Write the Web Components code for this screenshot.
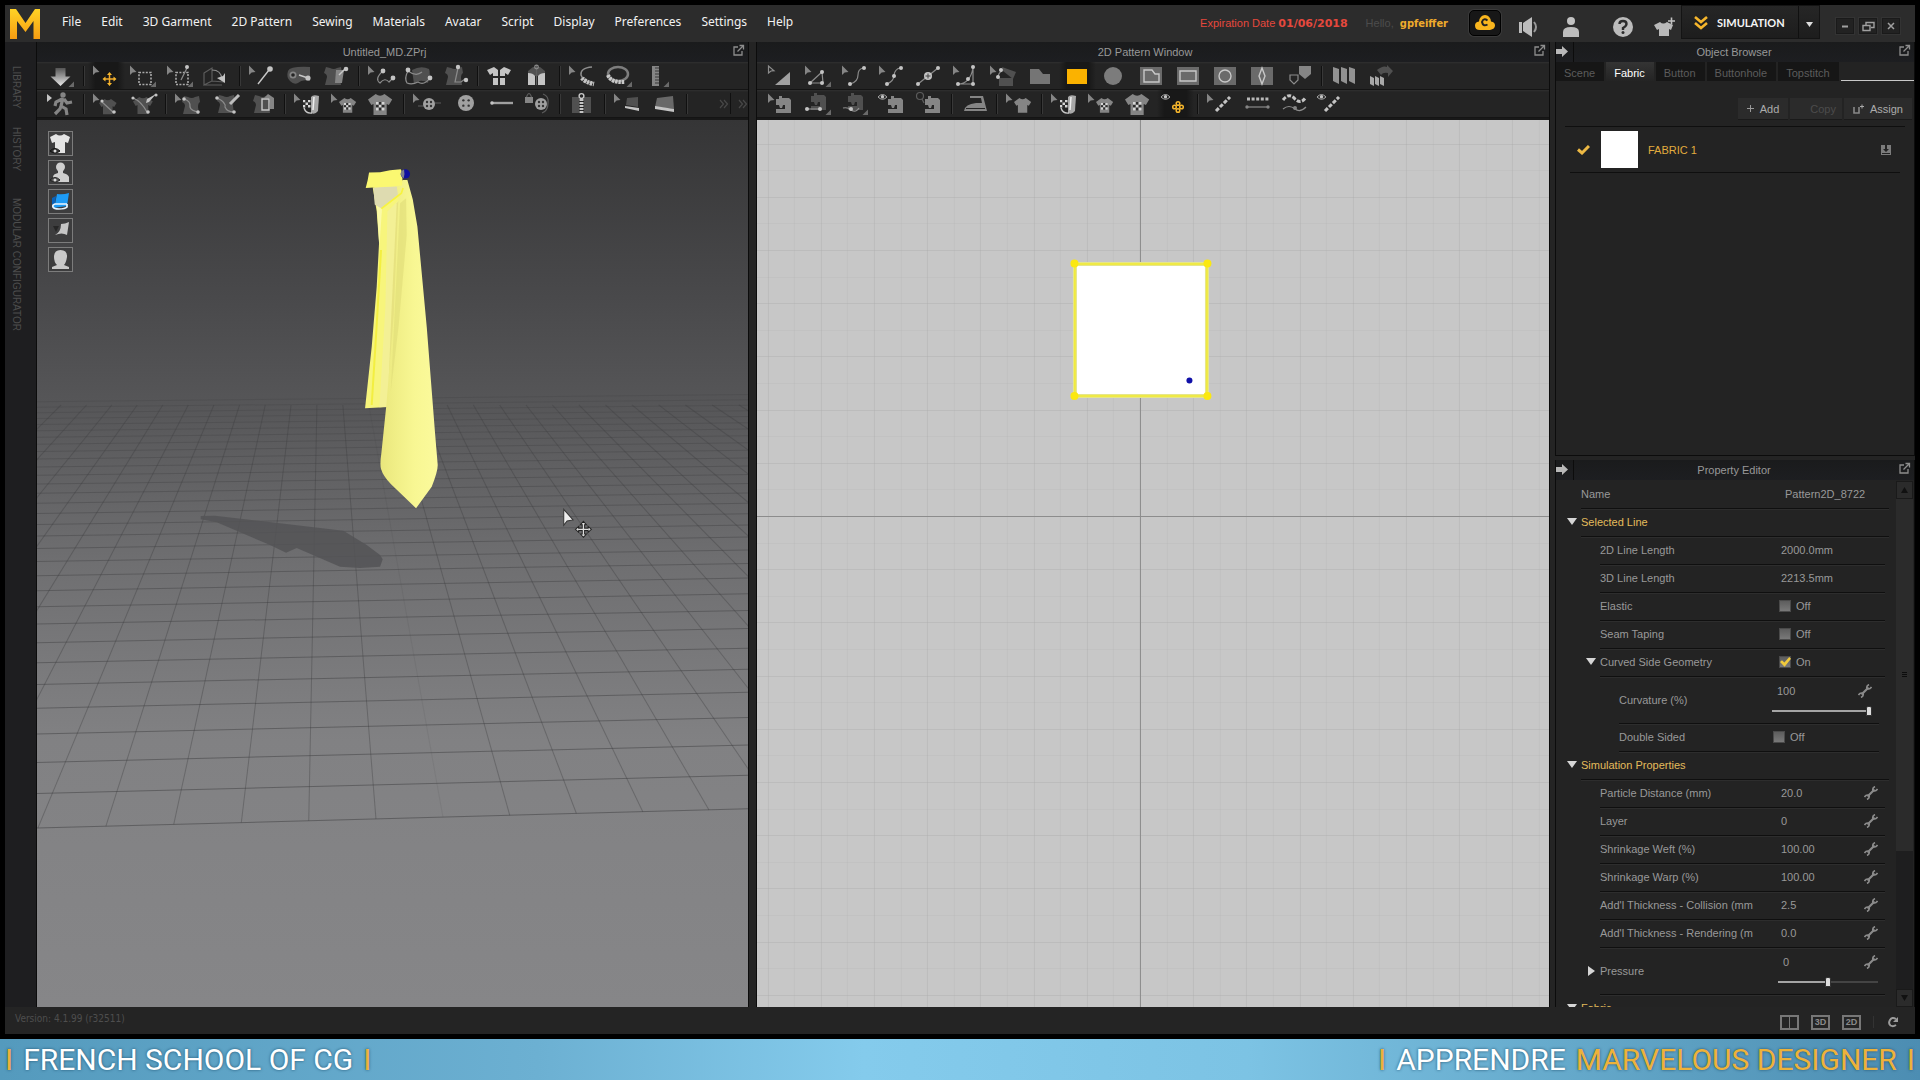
<!DOCTYPE html>
<html lang="en">
<head>
<meta charset="utf-8">
<title>Untitled_MD.ZPrj</title>
<style>
  html, body { height: 100%; }
  body {
    margin: 0; background: #000; color: #a2a2a2; overflow: hidden;
    font: 11px/16px "Liberation Sans", Arial, sans-serif;
    display: flex; flex-direction: column;
  }
  md-app { flex: 1; min-height: 0; }
</style>
</head>
<body>
<md-app></md-app>
<md-banner><span slot="left">FRENCH SCHOOL OF CG</span><span slot="right">APPRENDRE</span><span slot="accent">MARVELOUS DESIGNER</span></md-banner>

<script>
const RESET = `<style>
  *, *::before, *::after { box-sizing: border-box; }
  button { font: inherit; color: inherit; background: none; border: 0; padding: 0; margin: 0; }
  svg { display: block; }
  .g { fill: #858585; } .w { fill: #c4c4c4; } .d { fill: #505050; } .k { fill: #242424; } .y { fill: #f6b62c; }
  .lg { fill: none; stroke: #8c8c8c; stroke-width: 1.2; }
  .lw { fill: none; stroke: #c8c8c8; stroke-width: 1.4; }
  .ly { fill: none; stroke: #f0a92b; stroke-width: 1.5; }
  .ld { fill: none; stroke: #5c5c5c; stroke-width: 1.2; }
</style>`;

function component(tag, html, connect) {
  const template = document.createElement('template');
  template.innerHTML = RESET + html;
  customElements.define(tag, class extends HTMLElement {
    constructor() {
      super();
      this.attachShadow({ mode: 'open' }).append(template.content.cloneNode(true));
    }
    connectedCallback() { if (connect) connect(this, this.shadowRoot); }
  });
}

/* ---------- tool glyphs, drawn on a 37 x 28 cell ---------- */
const cur = '<path class="g" d="M5 3.500v9.500l2.600-2.600 3.900-.4z"/>';
const corner = '<path d="M31 19.500v5.500h-5.500z" fill="#6a6a6a"/>';
const dot = (x, y, r = 2) => `<circle class="w" cx="${x}" cy="${y}" r="${r}"/>`;
const eye = '<path d="M4 7q4.500-5 9 0-4.500 4.500-9 0z" fill="none" stroke="#a8a8a8"/><circle class="w" cx="8.500" cy="6.800" r="1.700"/>';
const machine = (c, x, y) => `<path class="${c}" transform="translate(${x} ${y})" d="M0 3h3V0h3v2h7l2 2v13H0v-4h9V9H7l-1 3H4L3 9H0z"/>`;
const tee = (c, x, y, s) => `<path class="${c}" transform="translate(${x} ${y}) scale(${s})" d="M7 0q4 3 8 0l7 5-3 5-2-1v10H5V9l-2 1-3-5z"/>`;
const checks = (x, y, s) => { let o = ''; for (let r = 0; r < 3; r++) for (let c = 0; c < 3; c++) o += `<rect x="${x + c * s}" y="${y + r * s}" width="${s}" height="${s}" fill="${(r + c) % 2 ? '#2c2c2c' : '#d6d6d6'}"/>`; return o; };
const bodice = (c, x, y) => `<path class="${c}" transform="translate(${x} ${y})" d="M2 0l4 1q4 2 7 0l4-1 1 6q-2 1-2 5l1 7H1l2-8q0-3-3-4z"/>`;
const btn = (x, y, r) => `<circle cx="${x}" cy="${y}" r="${r}" fill="#a0a0a0"/><g fill="#333"><circle cx="${x - r / 3}" cy="${y - r / 3}" r="1.200"/><circle cx="${x + r / 3}" cy="${y - r / 3}" r="1.200"/><circle cx="${x - r / 3}" cy="${y + r / 3}" r="1.200"/><circle cx="${x + r / 3}" cy="${y + r / 3}" r="1.200"/></g>`;
const roll = '<path d="M22 7q2-3 8-1l-1 15q-3 4-7 2z" fill="#a8a8a8"/><path d="M25 7l-1 13" stroke="#eee" stroke-width="1.500"/><path d="M15 18q2 6 8 5" class="lw"/>' + checks(14, 10, 2.5);
const plate = '<path fill="#6a6a6a" d="M7 5h22v18H7z"/>';

const ICONS = {
  down: '<path fill="url(#fade)" d="M12.500 6h10v8.500h5L17.500 24l-10-9.500h5z"/>' + corner,
  move: cur + '<g transform="translate(21.500 17)"><path class="ly" d="M-5 0H5M0-5V5"/><path class="y" d="M-7 0l3-2.500v5zM7 0L4-2.500v5zM0-7l2.500 3h-5zM0 7l2.500-3h-5z"/></g>',
  marquee: cur + '<path d="M14 10.500h12v12H14z" fill="none" stroke="#a9a9a9" stroke-width="1.600" stroke-dasharray="2 1.400"/>' + corner,
  marqueepin: cur + '<path d="M14 10.500h12v12H14z" fill="none" stroke="#a9a9a9" stroke-width="1.600" stroke-dasharray="2 1.400"/><path class="lg" d="M19 18l6-12"/>' + dot(25, 5) + corner,
  fold: '<path class="ld" d="M5 11l8-5v13l-8 4zM5 23h18M13 19l12 1"/><path class="lg" d="M13 8q9 0 10 9"/><path class="w" d="M18 16l8 5 0-10-2 3z"/>',
  pin: cur + '<path class="lw" d="M14 22l11-14"/>' + dot(26, 7, 2.8),
  rollpin: '<path class="d" d="M7 9q2-5 22-4v14q-8-2-12 2-4 2-8-2-4-4-2-10z"/><circle class="g" cx="12" cy="13" r="3.500"/><circle class="k" cx="12" cy="13" r="1.800"/><path class="lw" d="M18 13l9 3"/>' + dot(27, 16, 2.6),
  bodicepin: bodice('d', 6, 5) + '<path class="g" d="M18 8h8l-2 13h-7z"/><path class="lw" d="M21 13l6-6"/>' + dot(28, 7, 2.3),
  curve: cur + '<path class="lg" d="M20 9q-9 8-3 12 5-6 9-1l4-4"/>' + dot(20, 9, 2.4) + dot(30, 16, 2.4),
  blob: '<path class="d" d="M12 8q9-5 17-1 2 4-1 14-8-5-14 1z"/><path class="lg" d="M8 9q8 6 14 1M8 9Q4 16 7 21q5 2 11-1 6 4 12-4"/>' + dot(8, 8, 2.4) + dot(30, 16, 2.4),
  bodicepins: bodice('d', 8, 5) + '<path class="lg" d="M21 6l-3 14h6l4-3"/>' + dot(21, 5, 2.2) + dot(29, 18, 2.2),
  shirt4: '<path class="w" d="M12 5l4 3v6H11v-3l-3 2-3-5zM22 5l-4 3v6h5v-3l3 2 3-5zM11 16h5v7h-5zM18 16h5v7h-5z"/>',
  jacket: '<path class="d" d="M9 9l5-4h7l5 4v5H9z"/><path class="w" d="M9 11q5 0 7 3v9H9zM26 11q-5 0-7 3v9h7z"/><path class="ld" d="M17.500 3v20"/><circle cx="17.500" cy="5" r="1.800" class="lg"/>',
  tapecur: cur + '<path d="M28 5q-12 1-11 8 2 7 13 8" fill="none" stroke="#8e8e8e" stroke-width="1.500"/><path d="M18 16q3 4 12 6" fill="none" stroke="#c4c4c4" stroke-width="4.500" stroke-dasharray="2.400 .8"/>',
  tape: '<ellipse cx="17" cy="12" rx="10" ry="7" fill="none" stroke="#7d7d7d" stroke-width="2.500"/><path d="M7 13q3 8 17 7" fill="none" stroke="#c9c9c9" stroke-width="4" stroke-dasharray="2.500 .8"/>' + corner,
  ruler: '<path class="g" d="M14 4h7v20h-7z"/><path stroke="#383838" stroke-width="1.200" d="M17 6h4M17 9h4M17 12h4M17 15h4M17 18h4M17 21h4"/>' + corner,
  walk: '<path class="w" d="M4 4l5 4-5 4z"/><circle class="g" cx="20" cy="5" r="2.700"/><path d="M20 8l-2 8-1 3-5 5M18 16l5 3 1 6M19 9l-6 3-1 4M21 9l3 4 5-1" fill="none" stroke="#858585" stroke-width="3.200"/>',
  teecurve: cur + tee('d', 11, 9, .8) + '<path class="lg" d="M14 12l12 11"/>' + dot(14, 11, 1.6) + dot(26, 22, 1.8),
  teepen: tee('d', 8, 7, .9) + '<path class="lg" d="M8 8q8 3 14 14"/><path class="w" d="M31 4l-9 5-1 4 3-1z"/>' + dot(8, 8, 1.6) + dot(23, 22, 1.8) + dot(31, 5, 1.6),
  bodcurve: cur + bodice('d', 12, 6) + '<path class="lg" d="M14 9q7 2 6 8 1 4 9 5"/>' + dot(14, 9, 1.8) + dot(28, 22, 1.8),
  bodpen: bodice('d', 10, 5) + '<path class="lg" d="M10 8q9 4 8 9 2 5 9 5"/><path d="M32 5l-9 9" stroke="#bdbdbd" stroke-width="3"/>' + dot(10, 8, 1.8) + dot(27, 22, 1.8),
  bodsq: bodice('d', 9, 5) + '<path class="g" d="M20 8l4-4 6 4v11h-4V8z"/><path class="lw" d="M18 9h7v11h-7z"/>',
  texroll: cur + roll,
  texteecur: cur + tee('g', 13, 8, .78) + checks(18, 13, 2.2),
  textee: tee('g', 5, 4, 1.1) + checks(13, 12, 2.8),
  btncur: cur + '<path class="ld" d="M10 16h6M27 13h6"/>' + btn(21, 14, 6),
  btn: btn(21, 13, 8),
  hole: '<path d="M9 13h22" stroke="#a0a0a0" stroke-width="2.400"/><circle cx="10" cy="13" r="1.800" class="w"/>',
  lock: '<path class="g" d="M6 7h8v6H6z"/><path class="ld" d="M7.500 7q2.500-7 5 0"/>' + btn(22, 14, 6) + '<path class="ld" d="M24 4q6 2 5 9 0 8-6 10"/>',
  zip: '<path class="d" d="M8 7h7v16H8zM20 7h7v16h-7z"/><path d="M17.500 9v15" stroke="#c4c4c4" stroke-width="4" stroke-dasharray="2 1"/><circle cx="17.500" cy="6" r="2.400" class="lw"/>',
  flatcur: cur + '<path class="d" d="M18 8l11-1v10l-12-2z"/><path class="w" d="M16 16l14 2v3l-14-3z"/>',
  flat: '<path fill="#686868" d="M11 8l16-2 1 13-19-2z"/><path class="w" d="M9 16l19 3v3L9 19z"/>',
  more: '<path fill="none" stroke="#484848" stroke-width="1.200" d="M9 10l3.500 4L9 18M13 10l3.500 4L13 18M28 10l3.500 4-3.500 4M32 10l3.500 4-3.500 4"/><path stroke="#101010" d="M19.500 3v21"/>',
  transform: '<path class="lg" d="M5.500 4v7l2.500-2 3-.3z"/><path fill="#a0a0a0" d="M27 10v13H12z"/>',
  editpt: cur + '<path class="lg" d="M22 10L10 21h13z"/>' + dot(22, 10) + dot(10, 21) + dot(22, 21) + corner,
  curvept: cur + '<path class="lg" d="M13 22q8-2 8-9 0-6 5-7"/>' + dot(13, 22) + dot(27, 6),
  curve3: cur + '<path class="lg" d="M13 22q7-3 7-9 1-6 6-7"/>' + dot(13, 22) + dot(20, 14) + dot(27, 6),
  addpt: '<path class="lg" d="M7 22L27 6"/>' + dot(7, 22) + dot(27, 6) + '<circle cx="17" cy="14" r="4" class="w"/><path stroke="#444" d="M14.500 14h5M17 11.500v5"/>',
  trace: cur + '<path class="lg" d="M25 5v17H10Q22 22 25 6"/>' + dot(25, 5) + dot(10, 22) + dot(25, 22) + dot(20, 17),
  trace2: cur + '<path class="d" d="M14 16h14v8H14zM17 5l14 5-3 7-10-8z"/><path class="lg" d="M17 9q-4 2-4 7"/>' + dot(16, 8) + dot(13, 15),
  poly: '<path class="g" style="fill:#757575" d="M8 7h9l4 5h7v10H8z"/>',
  rect: '<path fill="#fbb200" d="M8 7h20v15H8z"/>',
  circle: '<circle fill="#7c7c7c" cx="17" cy="14" r="9"/>',
  ipoly: plate + '<path class="lw" d="M11 8h8l3 4h4v8H11z"/>',
  irect: plate + '<path class="lw" d="M10 9h16v10H10z"/>',
  icircle: plate + '<circle class="lw" cx="18" cy="14" r="6"/>',
  dart: plate + '<path class="lw" d="M18 6l3 8-3 8-3-8z"/>',
  shield: '<path class="lg" d="M9 13h8v5l-4 4-4-4z"/><path class="g" d="M18 4h12v8l-6 5-6-5z"/>',
  pleat: '<path fill="#929292" d="M7 5l6 2v15l-6-3zM15 5l6 2v15l-6-3zM23 5l6 2v15l-6-3z"/>',
  pleat2: '<path fill="#a8a8a8" d="M7 14l4 2v8l-4-2zM12 14l4 2v8l-4-2zM17 14l4 2v8l-4-2z"/><path class="d" d="M14 8q6-5 10-3V3l6 6-5 6v-4q-5-1-7 2z"/>',
  mach: cur + machine('g', 13, 6),
  mach2: machine('d', 11, 3) + '<path class="lg" d="M7 19h13"/>' + dot(7, 19) + dot(20, 19) + corner,
  mach3: machine('d', 11, 3) + '<path class="lg" d="M6 18q5-1 8 2 5 3 8-2"/>' + dot(14, 19) + corner,
  macheye: eye + machine('g', 14, 6),
  machlens: '<circle class="ld" cx="9" cy="6" r="3.500"/><path class="ld" d="M11 9l2 4"/>' + machine('g', 14, 6),
  iron: '<path class="g" fill-rule="evenodd" d="M14 6h13l4 15H8q1-7 12-8h6l-1-5H14z"/><path class="k" d="M10 18h19v1H10z"/>',
  teecur: cur + tee('g', 13, 8, .78),
  eyegold: eye + '<g fill="none" stroke="#f6b62c" stroke-width="1.500"><circle cx="21" cy="13.500" r="1.800"/><circle cx="21" cy="20.500" r="1.800"/><circle cx="17.500" cy="17" r="1.800"/><circle cx="24.500" cy="17" r="1.800"/></g>',
  stitchcur: cur + '<path d="M14 21L28 7" stroke="#c4c4c4" stroke-width="3" stroke-dasharray="4 1.600"/>',
  stitch: '<path d="M8 9h22" stroke="#b9b9b9" stroke-width="2.800" stroke-dasharray="3 1.600"/><path class="lg" d="M8 17h21"/><circle class="g" cx="8" cy="17" r="1.700"/><circle class="g" cx="29" cy="17" r="1.700"/>',
  stitchwave: '<path d="M7 10q6-8 12-1 6 6 11-2" fill="none" stroke="#c4c4c4" stroke-width="3" stroke-dasharray="4 1.600"/><path class="lg" d="M7 19q6-5 12 0 5 4 11-2"/><circle class="g" cx="19" cy="18" r="2"/>',
  stitcheye: eye + '<path d="M12 21L26 7" stroke="#c4c4c4" stroke-width="3" stroke-dasharray="4 1.600"/>'
};

component('md-tool', `<style>
  :host { display: block; flex: none; width: 37px; height: 27px; }
  button { display: block; width: 100%; height: 100%; }
  :host([active]) button { background: linear-gradient(90deg, #1c1c1c00 0, #181818 20%, #181818 80%, #1c1c1c00); }
</style><button type="button"><svg width="37" height="27" viewBox="0 0 37 27"></svg></button>`,
(el, root) => {
  const name = el.getAttribute('icon');
  root.querySelector('button').title = name;
  root.querySelector('svg').innerHTML =
    '<defs><linearGradient id="fade" x2="0" y2="1"><stop stop-color="#555"/><stop offset="1" stop-color="#e8e8e8"/></linearGradient></defs>' + ICONS[name];
});

component('md-toolbar', `<style>
  :host { display: flex; flex: none; height: 28px; padding-left: 6px; overflow: hidden;
    background: linear-gradient(#303030, #242424 2px); border-bottom: 1px solid #141414; }
  i { flex: none; width: 8px; height: 20px; margin-top: 4px;
    background: linear-gradient(90deg, transparent 3px, #101010 3px 4px, #383838 4px 5px, transparent 5px); }
  b { flex: 1; }
</style>`,
(el, root) => {
  el.getAttribute('tools').split(' ').forEach(t => {
    let n;
    if (t === '|') n = document.createElement('i');
    else if (t === '>') n = document.createElement('b');
    else {
      n = document.createElement('md-tool');
      n.setAttribute('icon', t.replace('*', ''));
      if (t.endsWith('*')) n.setAttribute('active', '');
    }
    root.append(n);
  });
});

/* ---------- dock panel ---------- */
component('md-panel', `<style>
  :host { display: flex; flex-direction: column; min-width: 0; min-height: 0; background: #232323; border: 0 solid #0c0c0c; border-width: 0 1px; }
  header { flex: none; height: 20px; display: flex; align-items: center; background: linear-gradient(#1a1b1c, #1d1e21); color: #989898; }
  h2 { flex: 1; margin: 0; font: inherit; text-align: center; }
  .hide { display: none; width: 18px; height: 20px; border-right: 1px solid #0c0c0c; }
  :host([collapsible]) .hide { display: block; }
  :host([collapsible]) h2 { padding-right: 4px; }
  .pop { width: 16px; height: 20px; }
  ::slotted(.view) { flex: 1; min-height: 0; }
</style>
<header>
  <button class="hide" title="Hide"><svg width="13" height="20" viewBox="0 0 13 20"><path fill="#b9b9b9" d="M0 7h6V4l6 5.500-6 5.500v-3H0z"/></svg></button>
  <h2><slot name="title"></slot></h2>
  <button class="pop" title="Undock"><svg width="14" height="20" viewBox="0 0 14 20"><path d="M6 5H2v8h8V9" fill="none" stroke="#8d8d8d" stroke-width="1.300"/><path d="M5.500 9.500L11 4M7.500 3.500h4v4" fill="none" stroke="#8d8d8d" stroke-width="1.300"/></svg></button>
</header><slot></slot>`);

/* ---------- 3D scene ---------- */
component('md-scene', `<style>
  :host { display: block; position: relative; border-top: 2px solid #181818; background: #6a6a6c; overflow: hidden; }
  .scene { width: 100%; height: 100%; }
  nav { position: absolute; left: 11px; top: 11px; display: flex; flex-direction: column; gap: 4px; }
  nav button { width: 25px; height: 25px; border: 1px solid #7c7c7c; background: #3d3d3e; }
</style>
<svg class="scene" viewBox="37 120 711 887" preserveAspectRatio="xMidYMid slice">
  <defs>
    <linearGradient id="sky" x2="0" y2="1">
      <stop stop-color="#353536"/><stop offset=".2" stop-color="#49494b"/><stop offset=".32" stop-color="#565658"/>
      <stop offset=".5" stop-color="#6f6f71"/><stop offset=".7" stop-color="#818183"/><stop offset="1" stop-color="#868688"/>
    </linearGradient>
    <linearGradient id="cloth"><stop stop-color="#e9e67c"/><stop offset=".25" stop-color="#f0ee86"/><stop offset=".6" stop-color="#f8f793"/><stop offset="1" stop-color="#fbfa9c"/></linearGradient>
  </defs>
  <rect x="37" y="120" width="711" height="887" fill="url(#sky)"/>
  <g id="floor" stroke="#3c3c3e"></g>
  <g transform="translate(180 140) scale(.33333)">
    <path fill="#545456" opacity=".85" d="M62 1128l43-1 195 23 190 22 70 43 40 30 8 13-8 22-60 4-60-4-130-56-32 14-48-23-160-68-48-9z"/>
    <path fill="#f7f57c" d="M578 143l12 72 7 95-7 130-15 180-20 185 68-4 50-320 25-260-20-100z"/>
    <path fill="#f3f095" d="M622 215l40-40 2 160-22 250-22 215-22 2 18-300z"/>
    <path fill="#e3df7a" opacity=".8" d="M650 190l18-20-10 250-18 180-14 120 8-200z"/>
    <path fill="#fbfaa8" d="M590 195l16 10-8 115z"/>
    <path fill="none" stroke="#f2ec2e" stroke-width="6" opacity=".75" d="M603 330l-14 240-14 225"/>
    <path fill="#dedbb0" d="M580 143l88-4 2 12-66 55-20-12z"/>
    <path fill="url(#cloth)" d="M668 120l14 0 16 58 14 82 28 300 25 320 8 95q0 20-18 65l-47 65-75-72q-24-25-30-46-4-14 1-48l15-145 22-270 14-350-5-36z"/>
    <path fill="#e0dc78" opacity=".6" d="M660 190l18-15 2 110-24 270-24 200 14-280z"/>
    <path fill="none" stroke="#f7f33f" stroke-width="5" d="M604 206l60-46 5-16"/>
    <path fill="#fbf871" d="M567 98l33-1 30-6 32-3 6 12-2 37-86 6-23 1 6-24z"/>
    <circle cx="676" cy="102" r="14" fill="#0e0e9e"/><path fill="#7d7f8c" d="M672 89q-10 4-10 14 1 9 9 12 4-12 1-26z"/>
    <path fill="#eee" stroke="#333" stroke-width="3" d="M1151 1108v48l10-13 18-3z"/>
    <g transform="translate(1210 1168)"><path d="M-17 0h34M0-17v34" stroke="#222" stroke-width="10"/><path fill="#ddd" stroke="#222" stroke-width="3" d="M-24 0l10-9v18zM24 0l-10-9v18zM0-24l9 10h-18zM0 24l9-10h-18z"/><path d="M-16 0h32M0-16v32" stroke="#ddd" stroke-width="4"/></g>
  </g>
</svg>
<nav>
  <button title="Garment"><svg width="23" height="23"><path fill="#e4e4e4" d="M7 2q4 3 8 0l6 3-2 6-3-1v11H6V10l-3 1-2-6z"/><path d="M1 19q5-5 10 0-5 4-10 0z" fill="#333" stroke="#111"/><circle cx="6" cy="19" r="1.500" fill="#ddd"/></svg></button>
  <button title="Avatar"><svg width="23" height="23"><circle cx="11.500" cy="6" r="4.500" fill="#cfcfcf"/><path fill="#cfcfcf" d="M9 9h5v3q5 1 6 4v5H4v-5q0-3 5-4z"/><path d="M1 19q5-5 10 0-5 4-10 0z" fill="#555" stroke="#222"/><circle cx="6" cy="19" r="1.500" fill="#ddd"/></svg></button>
  <button title="Texture surface"><svg width="23" height="23"><path fill="#1d9bf5" d="M8 4q6 1 12-1l-2 13-14 2q-1-3 2-4z"/><path fill="#0a62b8" d="M3 8l4-2-1 8-3 1z"/><path d="M18 14H6q-3 1-2 3 1 2 6 2 6 0 8-2v-3" fill="none" stroke="#eaf6ff" stroke-width="1.700"/></svg></button>
  <button title="Thickness"><svg width="23" height="23"><path fill="#c6c6c6" d="M12 5q4 0 8-2l-2 13q-5-3-12 0 6-3 6-11z"/><path fill="#1c1c1c" d="M4 7h6l-3 6z" opacity=".7"/></svg></button>
  <button title="Head"><svg width="23" height="23"><path fill="#c9c9c9" d="M11.500 2q7 0 6.500 7-1 6-3 8l5 2v2H3v-2l5-2Q5 14 5 9q0-7 6.500-7z"/></svg></button>
</nav>`,
(el, root) => {
  /* ground grid in one-point perspective: columns meet at (322,145), rows at a far point on the right */
  const P = { x: 322, y: 145 }, R = { x: 25300, y: 145 };
  const rowY = (k, x) => { const y0 = 142 + 686 * 18.9 / (18.9 + k); return y0 + (R.y - y0) * (x - 38) / (R.x - 38); };
  let out = '';
  for (let k = 0; k <= 31; k++)
    out += `<line x1="37" x2="748" y1="${rowY(k, 37)}" y2="${rowY(k, 748)}" opacity="${0.5 - k * 0.009}"/>`;
  for (let j = -14; j <= 20; j++) {
    const x = 308.7 + 67.3 * j - 0.1 * j * j, y = rowY(0, x);
    const t = (405 - P.y) / (y - P.y);
    out += `<line x1="${x}" y1="${y}" x2="${P.x + (x - P.x) * t}" y2="405" opacity="${j === 2 ? .1 : .36}"/>`;
  }
  root.getElementById('floor').innerHTML = out;
});

/* ---------- 2D pattern canvas ---------- */
component('md-pattern', `<style>
  :host { display: block; border-top: 2px solid #181818; background: #c6c6c6; overflow: hidden; }
  svg { width: 100%; height: 100%; }
</style>
<svg viewBox="757 120 792 887" preserveAspectRatio="xMidYMid slice">
  <rect x="757" y="120" width="792" height="887" fill="#c7c7c7"/>
  <g id="grid" stroke="#a9a9a9"></g>
  <path d="M1140.500 120v887M757 516.500h792" stroke="#8c8c8c"/>
  <rect x="1075" y="264" width="132" height="132" fill="#fff" stroke="#e6e68a" stroke-width="4"/>
  <rect x="1075" y="264" width="132" height="132" fill="none" stroke="#f2ea30" stroke-width="1.500"/>
  <g fill="#fbe810"><circle cx="1074.500" cy="263.500" r="4"/><circle cx="1207.500" cy="263.500" r="4"/><circle cx="1074.500" cy="396" r="4"/><circle cx="1207.500" cy="396" r="4"/></g>
  <circle cx="1189.500" cy="380.500" r="3" fill="#1010a8"/>
</svg>`,
(el, root) => {
  const step = 26.6; let out = '';
  for (let i = -20; i <= 20; i++) {
    const o = i % 2 ? .15 : .34;
    const x = Math.round(1140 + i * step) + .5, y = Math.round(516 + i * step) + .5;
    out += `<path d="M${x} 120v887" opacity="${o}"/><path d="M757 ${y}h792" opacity="${o}"/>`;
  }
  root.getElementById('grid').innerHTML = out;
});

/* ---------- menu bar ---------- */
component('md-menubar', `<style>
  :host { display: flex; align-items: center; height: 37px; background: #2c2c2c; padding: 0 15px 0 5px; }
  .menu { display: flex; gap: 20px; margin-left: 21px; font: 12px/18px "Noto Sans", sans-serif; color: #f2f2f2; margin-top: -4px; }
  .end { margin-left: auto; display: flex; align-items: center; gap: 14px; height: 37px; }
  .red { color: #e5483d; } .red b { font: bold 11px/16px "DejaVu Sans", sans-serif; }
  .hello { color: #4c4c4c; padding-left: 4px; } .hello b { color: #efab2c; font: bold 11px/16px "DejaVu Sans Condensed", "DejaVu Sans", sans-serif; padding-left: 3px; }
  .cloud { width: 32px; height: 26px; background: #171717; border: 1px solid #000; border-radius: 5px; box-shadow: 0 0 0 1px #3a3a3a; margin: -1px 0 0 7px; padding-left: 4px; }
  .ic { width: 28px; height: 26px; margin-top: 6px; }
  .ic.gap { margin-left: 10px; }
  .sim { display: flex; height: 34px; background: linear-gradient(#262626, #1d1d1d); border: 1px solid #141414; margin: -3px 2px 0 -12px; }
  .run { width: 116px; display: flex; align-items: center; gap: 9px; padding: 2px 0 0 12px; color: #f4f4f4; font: bold 11px/16px Lato, sans-serif; }
  .drop { width: 21px; border-left: 1px solid #101010; padding: 4px 0 0 5px; }
  .win { display: flex; gap: 5px; margin-top: 5px; }
  .win button { width: 18px; height: 16px; background: #222; border: 1px solid #1a1a1a; box-shadow: 0 0 0 1px #333; }
</style>
<svg width="31" height="32" viewBox="0 0 31 32"><defs><linearGradient id="m" x2="0" y2="1"><stop stop-color="#ffd326"/><stop offset="1" stop-color="#f59c12"/></linearGradient></defs>
<path fill="url(#m)" d="M0 31V1h6l9.500 14L25 1h5v30h-6.500V13l-8 11-8.500-11v18z"/></svg>
<nav class="menu"></nav>
<div class="end">
  <span class="red">Expiration Date <b>01/06/2018</b></span>
  <span class="hello">Hello, <b>gpfeiffer</b></span>
  <button class="cloud" title="Cloud"><svg width="22" height="18" viewBox="0 0 22 18"><path fill="#f8b51e" d="M6 16q-5 0-5-4.500Q1 8 5 7.500 6 1 11 1t6 6.500q4 .5 4 4T16 16z"/><path d="M13.500 6.500q-4-3-5.500 1.500 1 5 5.500 2.500" fill="none" stroke="#222" stroke-width="2"/></svg></button>
  <button class="ic" title="Sound"><svg width="28" height="26" viewBox="0 0 28 26"><path fill="#bdbdbd" d="M4 8h3v11H4zM8 9l9-6v20l-9-6z"/><path d="M19 8q4 5 0 10" fill="none" stroke="#9a9a9a" stroke-width="2"/></svg></button>
  <button class="ic" title="Account"><svg width="28" height="26" viewBox="0 0 28 26"><circle cx="14" cy="7" r="4" fill="#c2c2c2"/><path fill="#bdbdbd" d="M6 23v-5q0-5 8-5t8 5v5z"/></svg></button>
  <button class="ic gap" title="Help"><svg width="28" height="26" viewBox="0 0 28 26"><circle cx="14" cy="13" r="10" fill="#bcbcbc"/><path d="M10.500 10q0-3 3.500-3t3.500 3q0 2-3.500 4v2" fill="none" stroke="#2c2c2c" stroke-width="2.400"/><circle cx="14" cy="18.500" r="1.500" fill="#2c2c2c"/></svg></button>
  <button class="ic" title="New garment"><svg width="28" height="26" viewBox="0 0 28 26"><path fill="#b9b9b9" d="M9 8q3 3 7 0l6 3-2 5-2-1v7H8v-7l-2 1-3-5z"/><path d="M17 7h7M20.500 3.500v7" stroke="#c2c2c2" stroke-width="1.600"/></svg></button>
  <div class="sim"><button class="run"><svg width="14" height="16" viewBox="0 0 14 16"><path d="M1 2l6 5 6-5M1 8l6 5 6-5" fill="none" stroke="#f6b62c" stroke-width="2.600"/></svg><span>SIMULATION</span></button><button class="drop" title="Mode"><svg width="12" height="12" viewBox="0 0 12 12"><path fill="#ddd" d="M2 4h7l-3.500 5z"/></svg></button></div>
  <div class="win">
    <button title="Minimise"><svg width="16" height="14"><path d="M5 7.500h6" stroke="#a0a0a0" stroke-width="2"/></svg></button>
    <button title="Restore"><svg width="16" height="14"><path d="M6 6V3.500h8v5h-3M3 6.500h7v5H3z" fill="none" stroke="#a0a0a0" stroke-width="1.400"/></svg></button>
    <button title="Close"><svg width="16" height="14"><path d="M5 4l6 6M11 4l-6 6" stroke="#a0a0a0" stroke-width="1.500"/></svg></button>
  </div>
</div>`,
(el, root) => {
  root.querySelector('.menu').innerHTML = ['File', 'Edit', '3D Garment', '2D Pattern', 'Sewing', 'Materials', 'Avatar', 'Script', 'Display', 'Preferences', 'Settings', 'Help']
    .map(t => `<button type="button">${t}</button>`).join('');
});

component('md-rail', `<style>
  :host { display: flex; flex-direction: column; align-items: center; gap: 18px; padding: 24px 9px 0 0; background: #1e1e20; color: #4d4d4d; font-size: 10px; }
  button { writing-mode: vertical-rl; } button:last-child { margin-top: 9px; }
</style><button>LIBRARY</button><button>HISTORY</button><button>MODULAR CONFIGURATOR</button>`);

/* ---------- object browser ---------- */
component('md-browser', `<style>
  :host { display: block; }
  .tabs { display: flex; height: 20px; align-items: stretch; }
  .tabs button { background: #161616; color: #5c5c5c; padding: 2px 9px 0 8px; border-right: 2px solid #232323; height: 19px; }
  .tabs .on { background: linear-gradient(#343434, #242424); color: #fff; }
  .tabs i { flex: 1; border-bottom: 1px solid #c8c8c8; height: 19px; }
  .bar { display: flex; justify-content: flex-end; gap: 2px; padding: 16px 2px 7px; }
  .bar button { height: 21px; background: #2b2b2b; padding: 0 9px; color: #ababab; box-shadow: 0 1px #1a1a1a; display: flex; align-items: center; gap: 6px; }
  .bar .off { color: #4c4c4c; padding: 0 6px 0 20px; }
  .item { display: flex; align-items: center; height: 46px; margin: 0 14px; padding: 0 8px 0 7px; border-bottom: 1px solid #0f0f0f; }
  .rule { margin: 0 9px; height: 1px; background: #0f0f0f; }
  .sw { width: 37px; height: 37px; background: #fff; margin: 0 10px 0 11px; }
  .name { color: #e2ac3e; flex: 1; }
</style>
<div class="tabs"><button>Scene</button><button class="on">Fabric</button><button>Button</button><button>Buttonhole</button><button>Topstitch</button><i></i></div>
<div class="bar"><button><svg width="7" height="7"><path d="M0 3.500h7M3.500 0v7" stroke="#999"/></svg><span>Add</span></button><button class="off" disabled>Copy</button><button><svg width="11" height="10" viewBox="0 0 11 10"><path d="M1 3v6h5V3" fill="none" stroke="#888" stroke-width="1.600"/><path d="M7 2.500h4M9 .5v4" stroke="#aaa"/></svg><span>Assign</span></button></div>
<div class="rule"></div>
<div class="item"><svg width="13" height="10" viewBox="0 0 13 10"><path d="M1 4.500l4 3.500 7-7" fill="none" stroke="#edb944" stroke-width="3"/></svg><div class="sw"></div><span class="name">FABRIC 1</span><button title="Save"><svg width="12" height="12" viewBox="0 0 12 12"><path fill="#7c7c7c" d="M1 1h10v10H1z"/><path fill="#222" d="M5 1h2v4h2L6 8 3 5h2zM2 9h8v1H2z"/></svg></button></div>`);

/* ---------- property rows ---------- */
component('md-prop', `<style>
  :host { display: block; --in: 44px; --out: 11px; --val: 225px; color: #999; padding: 0 var(--out) 0 0; }
  :host([level="0"]) { --in: 25px; --out: 7px; --val: 229px; }
  :host([level="2"]) { --in: 63px; --out: 17px; --val: 219px; }
  .row { position: relative; display: flex; height: 28px; align-items: center; margin-left: var(--in); border-bottom: 1px solid #0f0f0f; box-shadow: 0 1px #2d2d2d; }
  :host([tall]) .row { height: 47px; }
  .tri { display: none; position: absolute; left: -14px; }
  :host([open]) .tri.o, :host([closed]) .tri.c { display: block; }
  label, .name { flex: none; width: calc(var(--val) - var(--in)); white-space: nowrap; }
  :host([head]) .name { color: #e4bc5c; width: auto; }
  .val { flex: 1; min-width: 0; display: flex; align-items: center; gap: 5px; }
  .top { display: flex; align-items: center; width: 100%; }
  :host([tall]) .val { flex-direction: column; align-items: stretch; gap: 6px; margin-left: -3px; }
  :host([tall]) .top { padding-left: 5px; }
  input[type=text] { flex: 1; width: 60px; min-width: 0; background: none; border: 0; padding: 0; margin: 0; font: inherit; color: inherit; height: 16px; }
  input[type=checkbox] { appearance: none; margin: 0 0 0 -2px; width: 12px; height: 12px; background: linear-gradient(#5d5d5d, #797979); border: 1px solid #4a4a4a; }
  input[type=checkbox]:checked::before { content: ""; display: block; width: 11px; height: 10px; background: #f0ca3c; clip-path: polygon(0 50%, 18% 32%, 40% 55%, 84% 0, 100% 16%, 42% 96%); }
  input[type=range] { appearance: none; width: 100px; height: 12px; margin: 0; background: linear-gradient(90deg, #a5a5a5 var(--f), #444 var(--f)) center / 100% 2px no-repeat; }
  input[type=range]::-webkit-slider-thumb { appearance: none; width: 6px; height: 10px; background: #ddd; border: 1px solid #333; border-radius: 2px 2px 0 0; }
  .wrench { flex: none; width: 14px; height: 14px; margin-right: 7px; }
</style>
<div class="row"><svg class="tri o" width="10" height="8"><path fill="#d6d6d6" d="M0 0h10L5 7z"/></svg><svg class="tri c" width="10" height="10"><path fill="#d6d6d6" d="M2 0l7 5-7 5z"/></svg></div>`,
(el, root) => {
  const row = root.querySelector('.row'), label = el.getAttribute('label'), kind = el.getAttribute('kind') || 'none', v = el.getAttribute('value');
  const wrench = '<button class="wrench" title="Edit"><svg width="14" height="14" viewBox="0 0 14 14"><path d="M3.500 10.500l7-7" stroke="#8b8b8b" stroke-width="2.200"/><path d="M13.500 3q-2 3-4.500 1.500Q8 2 11 .5M.5 11q2-3 4.500-1.500Q6 12 3 13.500" fill="none" stroke="#8b8b8b" stroke-width="1.600"/></svg></button>';
  const name = kind === 'none' || kind === 'text'
    ? `<span class="name">${label}</span>` : `<label for="f">${label}</label>`;
  const field = `<input id="f" type="text" value="${v}">`;
  const html = {
    none: '', text: `<div class="val"><span>${v}</span></div>`,
    name: `<div class="val">${field}</div>`,
    check: `<div class="val"><input id="f" type="checkbox" ${v === 'On' ? 'checked' : ''}><span>${v}</span></div>`,
    number: `<div class="val">${field}${wrench}</div>`,
    slider: `<div class="val"><div class="top">${field}${wrench}</div><input type="range" aria-label="${label}" value="${el.getAttribute('pos')}" style="--f:${el.getAttribute('pos')}%"></div>`
  }[kind];
  row.insertAdjacentHTML('beforeend', name + html);
});

component('md-properties', `<style>
  :host { display: flex; overflow: hidden; }
  .list { flex: 1; min-width: 0; overflow: hidden; padding-top: 1px; }
  .bar { flex: none; width: 17px; display: flex; flex-direction: column; background: #1e1e1f; margin: 1px 1px 0 0; }
  .bar button { height: 18px; background: #2b2b2b; border: 1px solid #1a1a1a; padding-left: 4px; }
  .thumb { flex: 0 0 67%; background: #2b2b2b; display: flex; align-items: center; justify-content: center; }
  .rest { flex: 1; }
</style>
<div class="list"><slot></slot></div>
<div class="bar"><button title="Up"><svg width="7" height="6"><path fill="#111" d="M3.500 0L7 6H0z"/></svg></button>
<div class="thumb"><svg width="5" height="6"><path d="M0 .5h5M0 2.500h5M0 4.500h5" stroke="#0c0c0c"/></svg></div><div class="rest"></div>
<button title="Down"><svg width="7" height="6"><path fill="#111" d="M0 0h7L3.500 6z"/></svg></button></div>`);

component('md-status', `<style>
  :host { display: flex; align-items: center; height: 27px; padding: 3px 16px 0 10px; background: #242424; color: #4e4e4e; }
  .v { font: 10px/16px "DejaVu Sans Condensed", "DejaVu Sans", sans-serif; flex: 1; margin-top: -6px; }
  .box { width: 19px; height: 15px; border: 2px solid #777; margin-right: 12px; color: #8a8a8a; font: bold 9px/11px "Liberation Sans", sans-serif; text-align: center; }
  .split { background: linear-gradient(90deg, transparent 7px, #777 7px 8px, transparent 8px); }
  .r { border-left: 1px solid #333; padding-left: 13px; }
</style>
<span class="v">Version: 4.1.99 (r32511)</span>
<button class="box split" title="Split view"></button><button class="box">3D</button><button class="box">2D</button>
<button class="r" title="Reset"><svg width="12" height="12" viewBox="0 0 12 12"><path d="M9 3Q5 .5 3 4t.5 5.500Q6 11 9 9" fill="none" stroke="#9c9c9c" stroke-width="2"/><path fill="#9c9c9c" d="M11 1v5H6z"/></svg></button>`);

component('md-app', `<style>
  :host { display: flex; flex-direction: column; padding: 5px; background: #000; }
  .work { flex: 1; min-height: 0; display: flex; background: #242424; }
  md-rail { flex: none; width: 31px; }
  .d3 { flex: 713; margin-right: 7px; }
  .d2 { flex: 794; margin-right: 5px; }
  .side { flex: none; width: 360px; display: flex; flex-direction: column; gap: 4px; }
  .browser { flex: 413; border-bottom-width: 1px; } .props { flex: 548; }
</style>
<md-menubar></md-menubar>
<div class="work">
  <md-rail></md-rail>
  <md-panel class="d3"><span slot="title">Untitled_MD.ZPrj</span>
    <md-toolbar tools="down | move* marquee marqueepin fold | pin rollpin bodicepin | curve blob bodicepins | shirt4 jacket | tapecur tape ruler"></md-toolbar>
    <md-toolbar tools="walk | teecurve teepen | bodcurve bodpen bodsq | texroll texteecur textee | btncur btn hole lock | zip | flatcur flat | > more"></md-toolbar>
    <md-scene class="view"></md-scene>
  </md-panel>
  <md-panel class="d2"><span slot="title">2D Pattern Window</span>
    <md-toolbar tools="transform editpt curvept curve3 addpt trace trace2 poly rect* circle ipoly irect icircle dart shield | pleat pleat2"></md-toolbar>
    <md-toolbar tools="mach mach2 mach3 macheye machlens | iron | teecur | texroll texteecur textee eyegold* | stitchcur stitch stitchwave stitcheye"></md-toolbar>
    <md-pattern class="view"></md-pattern>
  </md-panel>
  <div class="side">
    <md-panel class="browser" collapsible><span slot="title">Object Browser</span><md-browser class="view"></md-browser></md-panel>
    <md-panel class="props" collapsible><span slot="title">Property Editor</span>
      <md-properties class="view">
        <md-prop level="0" label="Name" kind="name" value="Pattern2D_8722"></md-prop>
        <md-prop level="0" label="Selected Line" head open></md-prop>
        <md-prop label="2D Line Length" kind="text" value="2000.0mm"></md-prop>
        <md-prop label="3D Line Length" kind="text" value="2213.5mm"></md-prop>
        <md-prop label="Elastic" kind="check" value="Off"></md-prop>
        <md-prop label="Seam Taping" kind="check" value="Off"></md-prop>
        <md-prop label="Curved Side Geometry" kind="check" value="On" open></md-prop>
        <md-prop level="2" label="Curvature (%)" kind="slider" value="100" pos="100" tall></md-prop>
        <md-prop level="2" label="Double Sided" kind="check" value="Off"></md-prop>
        <md-prop level="0" label="Simulation Properties" head open></md-prop>
        <md-prop label="Particle Distance (mm)" kind="number" value="20.0"></md-prop>
        <md-prop label="Layer" kind="number" value="0"></md-prop>
        <md-prop label="Shrinkage Weft (%)" kind="number" value="100.00"></md-prop>
        <md-prop label="Shrinkage Warp (%)" kind="number" value="100.00"></md-prop>
        <md-prop label="Add'l Thickness - Collision (mm" kind="number" value="2.5"></md-prop>
        <md-prop label="Add'l Thickness - Rendering (m" kind="number" value="0.0"></md-prop>
        <md-prop label="Pressure" kind="slider" value="0" pos="50" tall closed></md-prop>
        <md-prop level="0" label="Fabric" head open></md-prop>
      </md-properties>
    </md-panel>
  </div>
</div>
<md-status></md-status>`);

component('md-banner', `<style>
  :host { flex: none; display: flex; align-items: center; justify-content: space-between; height: 41px; padding: 0 5px 0 5px;
    background: linear-gradient(90deg, #549abd, #6cb0d2 28%, #84cbec 45%, #7cc3e4 65%, #5c9fc1 88%, #4c8db2);
    font: 400 30px/41px Roboto, sans-serif; color: #fff; text-shadow: 0 0 3px #1f5270; }
  .l, .r { display: flex; gap: 10px; }
  .y, .a { color: #edb23a; }
</style>
<div class="l"><span class="y">I</span><slot name="left"></slot><span class="y">I</span></div>
<div class="r"><span class="y">I</span><slot name="right"></slot><span class="a"><slot name="accent"></slot></span><span class="y">I</span></div>`);
</script>
</body>
</html>
